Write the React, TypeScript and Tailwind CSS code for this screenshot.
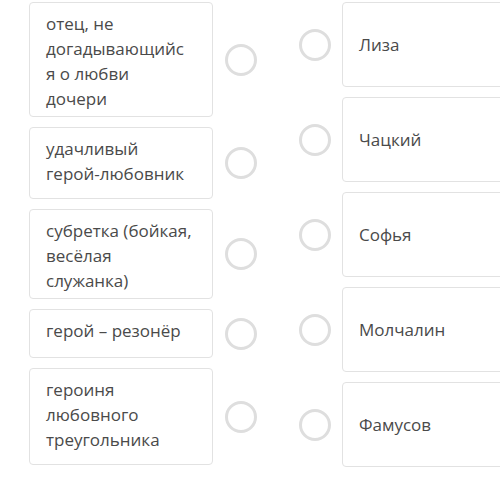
import React from "react";

const left = [
  { lines: ["отец, не", "догадывающийс", "я о любви", "дочери"], h: "h-[115px]" },
  { lines: ["удачливый", "герой-любовник"], h: "h-[72px]" },
  { lines: ["субретка (бойкая,", "весёлая", "служанка)"], h: "h-[90px]" },
  { lines: ["герой – резонёр"], h: "h-[49px]" },
  { lines: ["героиня", "любовного", "треугольника"], h: "h-[97px]" },
];

const right = ["Лиза", "Чацкий", "Софья", "Молчалин", "Фамусов"];

function Circle() {
  return <div className="w-8 h-8 shrink-0 rounded-full border-[3px] border-[#dedede] bg-white" />;
}

export default function App() {
  return (
    <div
      className="w-[500px] h-[494px] bg-white overflow-hidden flex pt-[2px] text-[#4a4a4a]"
      style={{ fontFamily: '"Open Sans", sans-serif' }}
    >
      <div className="flex flex-col gap-[10px] ml-[29px]">
        {left.map((item) => (
          <div key={item.lines.join(" ")} className="flex items-center gap-[12px]">
            <div
              className={`w-[184px] ${item.h} border border-[#e2e2e2] rounded-[4px] px-4 pt-2 text-[17px] leading-[25px] whitespace-nowrap`}
            >
              {item.lines.map((l) => (
                <div key={l}>{l}</div>
              ))}
            </div>
            <Circle />
          </div>
        ))}
      </div>
      <div className="flex flex-col gap-[10px] ml-[42px]">
        {right.map((name) => (
          <div key={name} className="flex items-center gap-[11px]">
            <Circle />
            <div className="w-[200px] h-[85px] border border-[#e2e2e2] rounded-[4px] px-4 flex items-center text-[17px] leading-[25px]">
              {name}
            </div>
          </div>
        ))}
      </div>
    </div>
  );
}
